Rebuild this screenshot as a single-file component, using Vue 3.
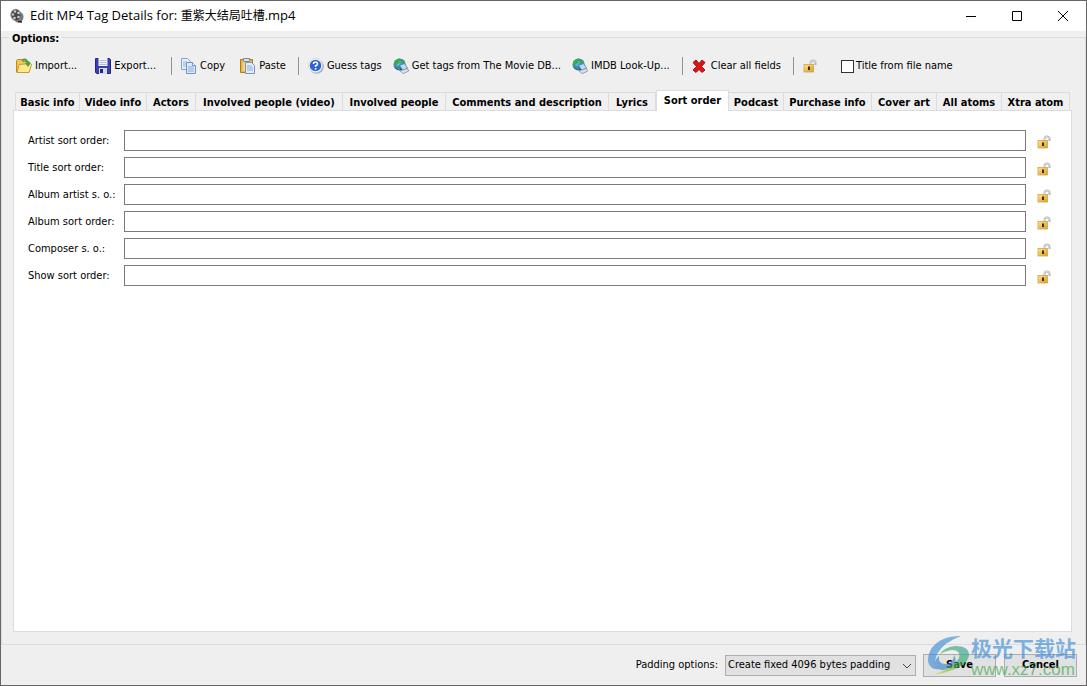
<script setup>
import { reactive, ref } from 'vue'

const tabs = [
  'Basic info', 'Video info', 'Actors', 'Involved people (video)', 'Involved people',
  'Comments and description', 'Lyrics', 'Sort order', 'Podcast', 'Purchase info',
  'Cover art', 'All atoms', 'Xtra atom',
]
const active = ref('Sort order')
const fields = reactive([
  { id: 'artist', label: 'Artist sort order:', value: '' },
  { id: 'title', label: 'Title sort order:', value: '' },
  { id: 'album-artist', label: 'Album artist s. o.:', value: '' },
  { id: 'album', label: 'Album sort order:', value: '' },
  { id: 'composer', label: 'Composer s. o.:', value: '' },
  { id: 'show', label: 'Show sort order:', value: '' },
])
const titleFromFile = ref(false)
const padding = ref('fixed')
</script>

<template>
  <div class="window">
    <svg class="defs" aria-hidden="true">
      <defs>
        <linearGradient id="gold" x1="0" y1="0" x2="1" y2="1">
          <stop offset="0" stop-color="#ffe48a" /><stop offset="1" stop-color="#dc9f22" />
        </linearGradient>
        <linearGradient id="leaf" x1="1" y1="0" x2="0" y2="1">
          <stop offset="0" stop-color="#2f9fb0" /><stop offset=".45" stop-color="#3fae55" /><stop offset="1" stop-color="#e8dc30" />
        </linearGradient>
        <radialGradient id="sea" cx=".35" cy=".35" r=".7">
          <stop offset="0" stop-color="#7fd0f8" /><stop offset="1" stop-color="#0b3f9c" />
        </radialGradient>
        <symbol id="lock" viewBox="0 0 14 14">
          <path d="M7.500 6V4a2.500 2.500 0 0 1 5 0v2" fill="none" stroke="#b4b4b4" stroke-width="2" />
          <path d="M7.500 6V4a2.500 2.500 0 0 1 5 0" fill="none" stroke="#e4e4e4" stroke-width=".8" />
          <rect x="1" y="5.500" width="9.500" height="7.500" fill="url(#gold)" stroke="#d0a553" stroke-width=".8" />
          <path d="M5 7.500h2v3.500H5z" fill="#3a2c08" />
        </symbol>
        <symbol id="globe" viewBox="0 0 16 16">
          <circle cx="6.500" cy="6.500" r="6" fill="url(#sea)" />
          <path d="M2 3Q4 .6 7 .6l1 1.600-2 1.300.5 1.500-2.500 1L3 8.500 1 7Q.5 5 2 3zM9 1.200q3 1.300 3.400 4L10.500 7 8.500 5.500z" fill="#35ad3f" />
          <path d="M3.500 10.500l3-.5 1 2.200z" fill="#43b04a" />
          <path d="M6.500 7.500l5-2L14.500 10l-4.500 2.500z" fill="#b9ddf5" stroke="#56809e" stroke-width=".8" />
          <path d="M7 12.800l7.500-2.300 1.200 2.500-5.500 2.700z" fill="#d9e1e7" stroke="#71838f" stroke-width=".7" />
        </symbol>
      </defs>
    </svg>

    <header class="titlebar">
      <svg class="app-icon" viewBox="0 0 16 16" aria-hidden="true">
        <ellipse cx="9.500" cy="9" rx="5" ry="5.500" fill="#75797c" />
        <ellipse cx="7" cy="7" rx="5" ry="5.700" fill="#44484b" stroke="#85898c" transform="rotate(-20 7 7)" />
        <g fill="#c6cacc">
          <circle cx="6" cy="3.500" r="1.300" /><circle cx="4" cy="6.500" r="1.200" /><circle cx="9.500" cy="5" r="1.300" />
          <circle cx="5.500" cy="10" r="1.300" /><circle cx="9.500" cy="9" r="1.300" />
        </g>
        <path d="M9 13.500l4 .5" stroke="#222" stroke-width="1.500" />
      </svg>
      <h1>Edit MP4 Tag Details for: <span class="cjk">重紫大结局吐槽</span>.mp4</h1>
      <button type="button" class="caption" aria-label="Minimize">
        <svg viewBox="0 0 12 12"><path d="M1 6.500h10" /></svg>
      </button>
      <button type="button" class="caption" aria-label="Maximize">
        <svg viewBox="0 0 12 12"><path d="M1.500 1.500h9v9h-9z" /></svg>
      </button>
      <button type="button" class="caption" aria-label="Close">
        <svg viewBox="0 0 12 12"><path d="M1 1l10 10M11 1L1 11" /></svg>
      </button>
    </header>

    <main class="options" role="group" aria-labelledby="options-title">
      <h2 id="options-title">Options:</h2>

      <div class="toolbar" role="toolbar" aria-label="Options">
        <button type="button" class="tool file">
          <svg viewBox="0 0 16 16" aria-hidden="true">
            <path d="M.5 14V2.500l1-1h4l1.500 2h6V14z" fill="#f0c750" stroke="#b98a22" />
            <path d="M3 6.500l11-1 1.500 1L13 14.500H1z" fill="#ffe88c" stroke="#c99a2e" />
            <path d="M6 2.500Q10-.5 12 5.500" fill="none" stroke="#3fa447" stroke-width="2" />
            <path d="M9 5l3 4 3-4.500z" fill="#3fa447" />
          </svg>Import...
        </button>
        <button type="button" class="tool file">
          <svg viewBox="0 0 16 16" aria-hidden="true">
            <path d="M.5.5h14l1 1v14H1.500l-1-1z" fill="#3c3fae" stroke="#26287d" />
            <path d="M3.500 0h9v8h-9z" fill="#f1f3fb" />
            <path d="M4.500 2.500h7M4.500 4.500h7M4.500 6.500h7" stroke="#b9bed4" />
            <path d="M4 10h8v6H4z" fill="#d5d8e6" /><path d="M5 11h3v4H5z" fill="#26287d" />
          </svg>Export...
        </button>
        <span class="sep"></span>
        <button type="button" class="tool">
          <svg viewBox="0 0 16 16" aria-hidden="true">
            <path d="M.5.5h6l3 3v8h-9z" fill="#e2edfb" stroke="#8ba3c7" />
            <path d="M2 4h4M2 6h5M2 8h5" stroke="#9db7da" />
            <path d="M5.500 4.500h6l3 3v8h-9z" fill="#dbe8fa" stroke="#7893bd" />
            <path d="M11.500 4.500v3h3" fill="#fff" stroke="#7893bd" />
            <path d="M7 9h6M7 11h6M7 13h6" stroke="#8fadd5" />
          </svg>Copy
        </button>
        <button type="button" class="tool">
          <svg viewBox="0 0 16 16" aria-hidden="true">
            <path d="M.5 1.500h12v13H.5z" fill="#e7b238" stroke="#a97c1c" />
            <path d="M2.500 3h8v10h-8z" fill="#f5d77f" /><path d="M3.500.5h6v3h-6z" fill="#dde1e5" stroke="#85898e" />
            <path d="M5.500 4.500h6l3 3v8h-9z" fill="#e2ecfa" stroke="#7893bd" />
            <path d="M7 8h5M7 10h6M7 12h6" stroke="#8fadd5" />
          </svg>Paste
        </button>
        <span class="sep"></span>
        <button type="button" class="tool web">
          <svg viewBox="0 0 16 16" aria-hidden="true">
            <circle cx="8.500" cy="8.500" r="7.300" fill="#a9adb3" />
            <circle cx="7.500" cy="7.500" r="7" fill="#fff" stroke="#c8cdd5" stroke-width=".8" />
            <circle cx="7.500" cy="7.500" r="5.800" fill="#2f65cf" />
            <path d="M5.500 6Q5.500 4 7.500 4t2 1.900Q9.500 7 7.600 7.800V9" fill="none" stroke="#fff" stroke-width="1.500" />
            <path d="M6.800 10h1.600v1.600H6.800z" fill="#fff" />
          </svg>Guess tags
        </button>
        <button type="button" class="tool web"><svg aria-hidden="true"><use href="#globe" /></svg>Get tags from The Movie DB...</button>
        <button type="button" class="tool"><svg aria-hidden="true"><use href="#globe" /></svg>IMDB Look-Up...</button>
        <span class="sep"></span>
        <button type="button" class="tool">
          <svg viewBox="0 0 16 16" aria-hidden="true">
            <path d="M1 4.500L4 2 7 5.500 10 2l3 2.500L9.500 8.500l3.500 3.500L10 14.500 7 11.500 4 14.500 1 12l3.500-3.500z" fill="#e01414" stroke="#7c1010" stroke-width=".9" />
          </svg>Clear all fields
        </button>
        <span class="sep"></span>
        <button type="button" class="lock" aria-label="Unlock all"><svg><use href="#lock" /></svg></button>
        <label class="check"><input v-model="titleFromFile" type="checkbox" />Title from file name</label>
      </div>

      <div class="book">
        <div class="tabs" role="tablist">
          <button
            v-for="tab in tabs" :key="tab" type="button" role="tab" class="tab"
            :class="{ active: tab === active }" :aria-selected="tab === active" @click="active = tab"
          >{{ tab }}</button>
        </div>
        <section class="panel" role="tabpanel" :aria-label="active">
          <div v-for="f in fields" :key="f.id" class="row">
            <label :for="f.id">{{ f.label }}</label>
            <input :id="f.id" v-model="f.value" type="text" />
            <button type="button" class="lock" :aria-label="'Lock ' + f.label"><svg><use href="#lock" /></svg></button>
          </div>
        </section>
      </div>
    </main>

    <footer class="footer">
      <label for="padding">Padding options:</label>
      <div class="combo">
        <select id="padding" v-model="padding">
          <option value="fixed">Create fixed 4096 bytes padding</option>
        </select>
        <svg viewBox="0 0 10 6" aria-hidden="true"><path d="M1 1l4 4 4-4" /></svg>
      </div>
      <button type="button" class="action">Save</button>
      <button type="button" class="action">Cancel</button>
    </footer>

    <div class="watermark" aria-hidden="true">
      <svg viewBox="0 0 44 42">
        <path d="M34 1Q13 1 4 14-2 26 4 32q3 3 8 2-6-6-2-15Q17 7 34 1z" fill="#3f8fd8" />
        <path d="M12 21q-1 9 8 8 7-2 7-9 5 7-4 13-10 5-15-2-1-6 4-10z" fill="#3a86d0" />
        <path d="M12 20q5-8 16-9 14 0 14 9-1 14-36 20 21-8 26-17 2-8-7-8-8 1-13 5z" fill="url(#leaf)" />
      </svg>
      <div class="brand"><span class="name">极光下载站</span><span class="site">www.xz7.com</span></div>
    </div>
  </div>
</template>

<style>
body { background: #efefef; }
</style>

<style scoped>
* { box-sizing: border-box; }
.window {
  position: relative;
  display: flex;
  flex-direction: column;
  min-height: 100vh;
  border: 1px solid #666;
  background: #efefef;
  color: #000;
  font: 11px/14px "DejaVu Sans Condensed", Tahoma, sans-serif;
}
.defs { position: absolute; width: 0; height: 0; }
button, input, select { font: inherit; color: inherit; margin: 0; }
button { padding: 0; border: 0; background: none; white-space: nowrap; }

.titlebar { display: flex; align-items: center; height: 30px; padding-left: 8px; background: #fff; }
.app-icon { width: 16px; height: 16px; margin-right: 5px; }
h1 { flex: 1; margin: 0; padding-bottom: 2px; font: 13px/20px "Open Sans", "Noto Sans CJK SC", sans-serif; }
.cjk { font-size: 12px; }
.caption { display: flex; align-items: center; justify-content: center; width: 46px; height: 30px; }
.caption svg { width: 12px; height: 12px; fill: none; stroke: #000; }

.options {
  flex: 1;
  display: flex;
  flex-direction: column;
  margin-top: 6px;
  border: 1px solid #dcdcdc;
}
h2 { align-self: flex-start; margin: -7px 0 0 7px; padding: 1px 3px 0; background: #efefef; font: inherit; font-weight: bold; }
.toolbar { display: flex; align-items: center; height: 26px; margin-top: 7px; padding-left: 14px; }
.tool { display: flex; align-items: center; gap: 3px; height: 22px; margin-right: 15px; }
.tool svg { width: 16px; height: 16px; }
.tool.file { margin-right: 18px; }
.tool.web { margin-right: 11px; }
.sep { width: 1px; height: 18px; margin-right: 9px; margin-left: -3px; background: #919191; }
.lock { display: flex; align-items: center; }
.lock svg { width: 14px; height: 14px; }
.check { display: flex; align-items: center; gap: 2px; margin-left: 24px; white-space: nowrap; }
.check input { appearance: none; width: 13px; height: 13px; border: 1px solid #333; background: #fff; }
.check input:checked { background: #333; }

.book { flex: 1; display: flex; flex-direction: column; margin: 11px 13px 12px 11px; }
.tabs {
  display: grid;
  grid-template-columns: 65fr 67fr 49fr 147fr 103fr 163fr 47fr 73fr 55fr 88fr 65fr 65fr 68fr;
  align-items: end;
  height: 20px;
  margin: 0 2px;
}
.tab {
  height: 18px;
  padding-top: 2px;
  border: 1px solid #dcdcdc;
  border-width: 1px 1px 0 0;
  background: #f0f0f0;
  font-weight: bold;
}
.tab:first-child { border-left-width: 1px; }
.tab.active { position: relative; height: 21px; margin: 0 0 -1px; padding: 0; background: #fff; border-left-width: 1px; }
.panel { flex: 1; display: flex; flex-direction: column; gap: 6px; padding: 19px 20px 0 14px; border: 1px solid #dcdcdc; background: #fff; }
.row { display: grid; grid-template-columns: 96px 1fr 25px; align-items: center; height: 21px; }
.row input { width: 100%; height: 21px; padding: 2px 4px; border: 1px solid #7a7a7a; border-radius: 0; background: #fff; }
.row .lock { justify-content: flex-end; padding-top: 3px; }

.footer { display: flex; align-items: center; justify-content: flex-end; height: 40px; padding-right: 9px; }
.combo { position: relative; width: 191px; margin: 0 7px; }
.combo select { appearance: none; display: block; width: 100%; height: 21px; padding: 0 2px; border: 1px solid #adadad; border-radius: 0; background: #e1e1e1; }
.combo svg { position: absolute; top: 8px; right: 4px; width: 10px; height: 6px; fill: none; stroke: #444; pointer-events: none; }
.action { width: 73px; height: 23px; border: 1px solid #adadad; background: #e1e1e1; font-weight: bold; }
.action + .action { margin-left: 8px; }

.watermark { position: absolute; right: 10px; bottom: 4px; display: flex; opacity: .65; pointer-events: none; }
.watermark svg { width: 44px; height: 42px; }
.brand { display: flex; flex-direction: column; }
.name { font: bold 21px/24px "Noto Sans CJK SC", sans-serif; color: #3f8fd8; }
.site { font: 17px/22px "Liberation Sans", Arial, sans-serif; color: #3fa850; }
</style>
